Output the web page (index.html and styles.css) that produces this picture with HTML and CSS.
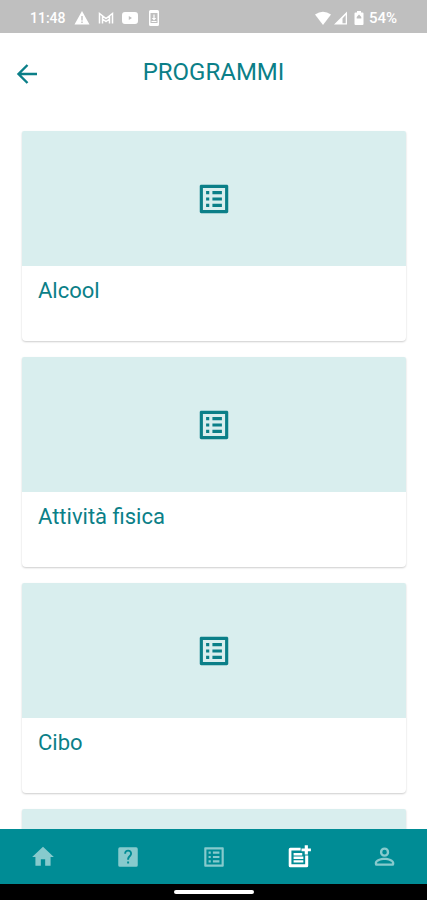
FILE: index.html
```html
<!DOCTYPE html>
<html lang="it">
<head>
<meta charset="utf-8">
<meta name="viewport" content="width=device-width, initial-scale=1">
<title>Programmi</title>
<link rel="stylesheet" href="styles.css">
</head>
<body>
<svg class="defs" aria-hidden="true">
  <symbol id="list" viewBox="0 0 24 24"><path d="M19 5v14H5V5h14m1.100-2H3.900c-.5 0-.9.400-.9.900v16.200c0 .4.400.9.900.9h16.200c.4 0 .9-.5.900-.9V3.900c0-.5-.5-.9-.9-.9zM11 7h6v2h-6V7zm0 4h6v2h-6v-2zm0 4h6v2h-6zM7 7h2v2H7zm0 4h2v2H7zm0 4h2v2H7z"/></symbol>
</svg>
<div class="status">
  <div class="status-group status-left">
    <span>11:48</span>
    <svg class="status-icon" viewBox="0 0 16 16"><path fill-rule="evenodd" d="M8 1l7.500 13.500H.5zM7.300 6v4.500h1.400V6zM7.300 11.500V13h1.400v-1.500z"/></svg>
    <svg class="status-icon" viewBox="0 0 16 16"><path d="M1.500 13.500V3.500L8 8.500l6.500-5v10M4.500 13.500V6M11.500 13.500V6M4.500 9L8 11.500 11.500 9" fill="none" stroke="currentColor" stroke-width="1.500"/></svg>
    <svg class="status-icon" viewBox="0 0 16 16"><path fill-rule="evenodd" d="M3 2h10q3 0 3 3v6q0 3-3 3H3q-3 0-3-3V5q0-3 3-3zM6.800 6v4L10 8z"/></svg>
    <svg class="status-icon" viewBox="0 0 16 16"><path fill-rule="evenodd" d="M4.500 0h7q1.500 0 1.500 1.500v13q0 1.500-1.500 1.500h-7Q3 16 3 14.500v-13Q3 0 4.500 0zM4.500 3v10h7V3zM7.400 4.500h1.200V8h1.700L8 10.500 5.700 8h1.700zM5.500 11h5v1h-5z"/></svg>
  </div>
  <div class="status-group status-right">
    <svg class="status-icon" viewBox="0 0 16 16"><path d="M0 4.500Q8-1 16 4.500L8 15z"/></svg>
    <svg class="status-icon" viewBox="0 0 16 16"><path fill-rule="evenodd" d="M14 1.500v13H1zM12.700 5L9.500 8.500v4.700h3.200z"/></svg>
    <svg class="status-icon" viewBox="0 0 16 16"><path fill-rule="evenodd" d="M6 1h4v1.500h1.500q1 0 1 1V14q0 1-1 1h-7q-1 0-1-1V3.500q0-1 1-1H6zM8 4.500L5.700 7v1.500h4.600V7z"/></svg>
    <span>54%</span>
  </div>
</div>
<header class="header">
  <button class="back" type="button" aria-label="Indietro"><svg viewBox="0 0 24 24"><path d="M22 12H3.500M12.500 3l-9 9 9 9" fill="none" stroke="currentColor" stroke-width="2.400"/></svg></button>
  <h1>PROGRAMMI</h1>
</header>
<main class="programs">
  <a class="card" href="#alcool">
    <div class="media"><svg><use href="#list"/></svg></div>
    <h2>Alcool</h2>
  </a>
  <a class="card" href="#attivita">
    <div class="media"><svg><use href="#list"/></svg></div>
    <h2>Attività fisica</h2>
  </a>
  <a class="card" href="#cibo">
    <div class="media"><svg><use href="#list"/></svg></div>
    <h2>Cibo</h2>
  </a>
  <div class="card">
    <div class="media"></div>
  </div>
</main>
<nav class="tabs">
  <a href="#home" aria-label="Home"><svg viewBox="0 0 24 24"><path d="M10 20v-6h4v6h5v-8h3L12 2.500 2 12h3v8z"/></svg></a>
  <a href="#quiz" aria-label="Domande"><svg viewBox="0 0 24 24"><path fill-rule="evenodd" d="M4.500 3h15q1.500 0 1.500 1.500v15q0 1.500-1.500 1.500h-15Q3 21 3 19.500v-15Q3 3 4.500 3zM11.200 16.200V18H13v-1.800zM8.500 9h1.700c0-1.200.8-2 1.900-2s1.900.8 1.900 1.800c0 1.800-2.800 2.200-2.800 5.700H13c0-2.600 2.700-3 2.700-5.700C15.700 6.900 14.200 5.400 12.100 5.400S8.500 6.900 8.500 9z"/></svg></a>
  <a href="#elenco" aria-label="Elenco"><svg><use href="#list"/></svg></a>
  <a class="active" href="#programmi" aria-label="Programmi" aria-current="page"><svg viewBox="0 0 24 24"><path d="M17.700 18.600H5V6h8.500V3.500H4Q2.500 3.500 2.500 5v15q0 1.500 1.500 1.500h15q1.500 0 1.500-1.500V10.500h-2.800zM20.200 1.200h-2.900v3h-3v2.600h3v3h2.900v-3H23V4.200h-2.800zM7 8.300h8v2.200H7zM7 11.600h9v2.200H7zM7 14.900h9v2.200H7z"/></svg></a>
  <a href="#profilo" aria-label="Profilo"><svg viewBox="0 0 24 24"><path d="M12.500 5.400a2.100 2.100 0 1 1 0 4.200 2.100 2.100 0 0 1 0-4.200m0-2.200a4.300 4.300 0 1 0 0 8.600 4.300 4.300 0 0 0 0-8.600zm0 11.600c3.500 0 6.800 1.500 6.800 2.600v.5H5.700v-.5c0-1.100 3.300-2.600 6.800-2.600m0-2.200c-3.500 0-9 1.700-9 4.800v1q0 1.700 1.700 1.700h14.600q1.700 0 1.700-1.700v-1c0-3.100-5.500-4.800-9-4.800z"/></svg></a>
</nav>
<div class="gesture"><span></span></div>
</body>
</html>
```
FILE: styles.css
```css
* { box-sizing: border-box; }

body {
  margin: 0;
  height: 100vh;
  display: flex;
  flex-direction: column;
  background: #fff;
  color: #0b7f88;
  font-family: Roboto, "Liberation Sans", sans-serif;
}

svg { display: block; fill: currentColor; }
.defs { position: absolute; width: 0; height: 0; }
h1, h2 { margin: 0; font-weight: 400; }

.status {
  flex: none;
  height: 33px;
  padding: 2px 30px 0;
  display: flex;
  justify-content: space-between;
  align-items: center;
  background: #bfbfbf;
  color: #fff;
  font-weight: 500;
}
.status-group { display: flex; align-items: center; }
.status-left { gap: 8px; font-size: 14px; }
.status-right { gap: 2px; font-size: 15px; }
.status-icon { width: 16px; height: 16px; }

.header {
  flex: none;
  display: grid;
  grid-template-columns: 40px 1fr 40px;
  align-items: center;
  height: 78px;
  padding: 0 8px;
}
.header h1 { font-size: 24px; line-height: 32px; text-align: center; }
.back {
  width: 40px;
  height: 40px;
  margin-top: 4px;
  padding: 8px 7px;
  border: 0;
  background: none;
  color: inherit;
}
.back svg { width: 24px; height: 24px; }

.programs {
  flex: 1;
  min-height: 0;
  overflow: hidden;
  padding: 20px 21px 0 22px;
  display: flex;
  flex-direction: column;
  gap: 16px;
}
.card {
  flex: none;
  height: 210px;
  border-radius: 2px 2px 4px 4px;
  overflow: hidden;
  background: #fff;
  box-shadow: 0 1px 2px rgba(0, 0, 0, 0.2);
  color: inherit;
  text-decoration: none;
}
.media {
  height: 135px;
  display: flex;
  align-items: center;
  justify-content: center;
  background: #d9eeee;
}
.media svg { width: 38px; height: 38px; }
.card h2 { padding: 9px 16px; font-size: 22px; line-height: 32px; }

.tabs {
  flex: none;
  height: 55px;
  display: flex;
  background: #008c95;
  color: #87cacd;
}
.tabs a {
  flex: 1;
  display: flex;
  align-items: center;
  justify-content: center;
  color: inherit;
}
.tabs .active { color: #fff; }
.tabs svg { width: 26px; height: 26px; }

.gesture {
  flex: none;
  height: 16px;
  display: flex;
  align-items: center;
  justify-content: center;
  background: #000;
}
.gesture span { width: 80px; height: 4px; border-radius: 2px; background: #fff; }
```
